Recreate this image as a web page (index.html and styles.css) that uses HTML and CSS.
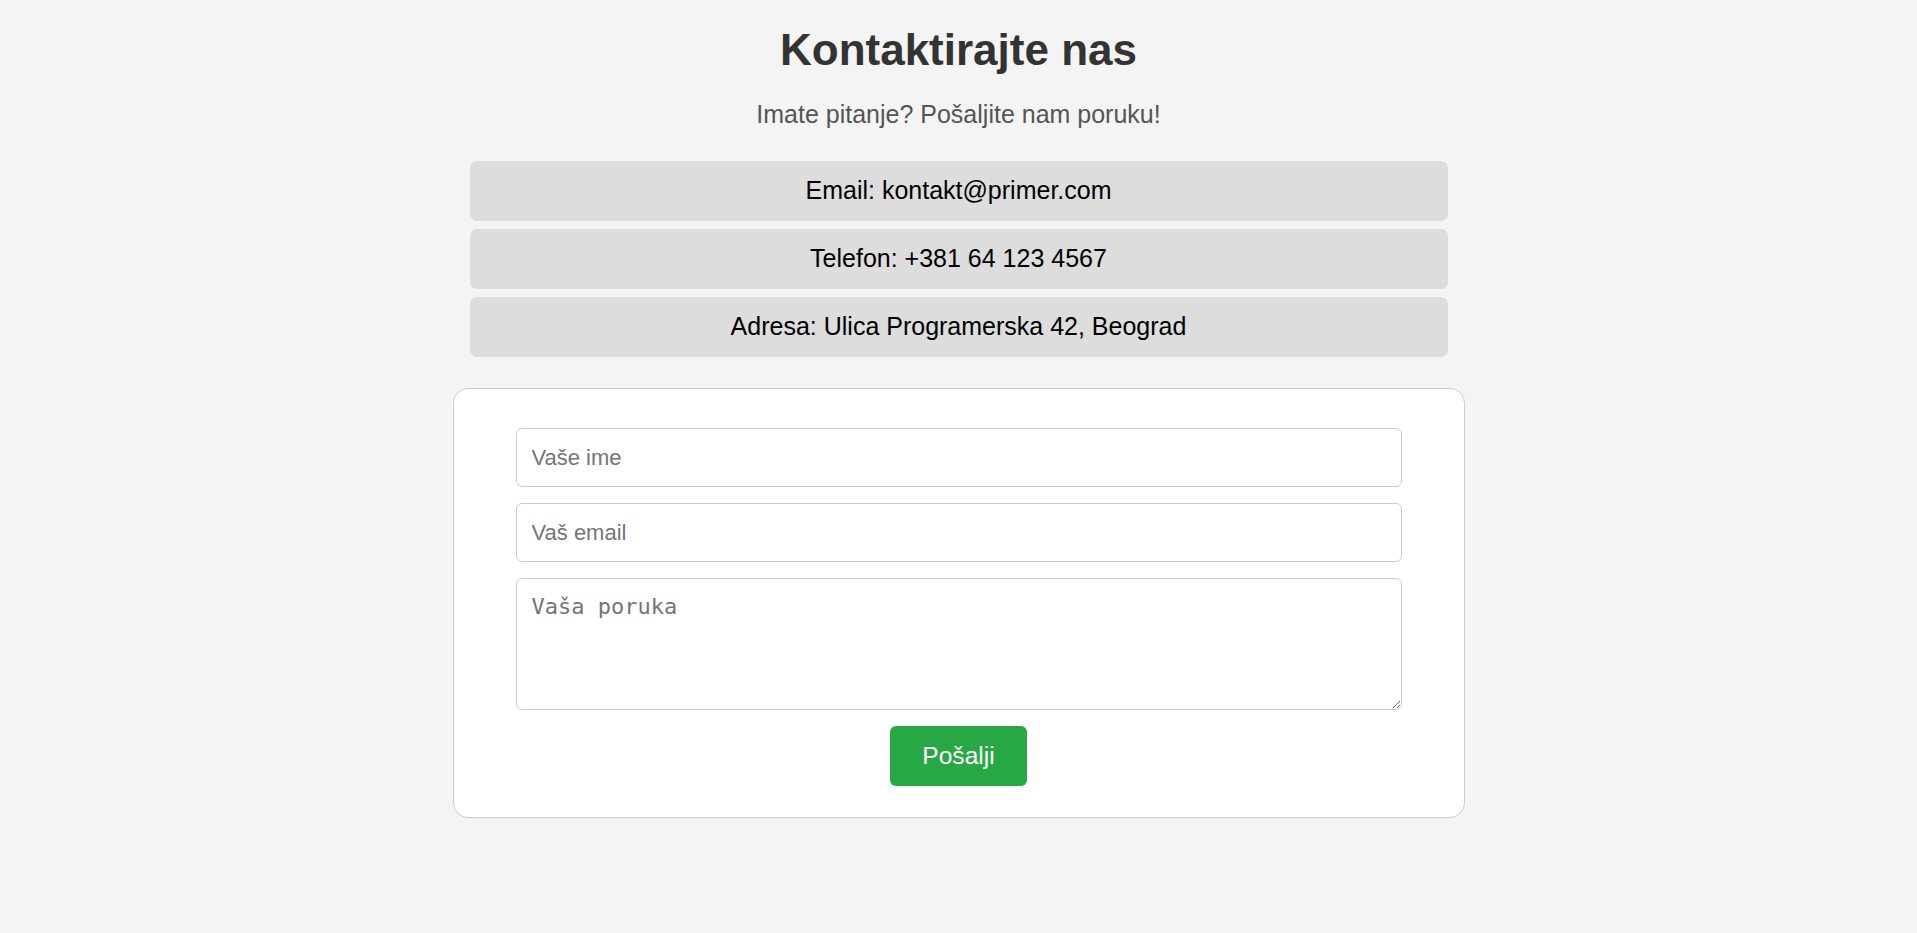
FILE: index.html
```html
<!DOCTYPE html>
<html lang="sr">
<head>
<meta charset="utf-8">
<title>Kontakt</title>
<link rel="stylesheet" href="styles.css">
</head>
<body>
<main class="page">
  <h1 class="title">Kontaktirajte nas</h1>
  <p class="subtitle">Imate pitanje? Pošaljite nam poruku!</p>
  <ul class="info-list">
    <li class="info-item">Email: kontakt@primer.com</li>
    <li class="info-item">Telefon: +381 64 123 4567</li>
    <li class="info-item">Adresa: Ulica Programerska 42, Beograd</li>
  </ul>
  <form class="contact-card">
    <input class="field" type="text" placeholder="Vaše ime">
    <input class="field" type="email" placeholder="Vaš email">
    <textarea class="field field-message" placeholder="Vaša poruka"></textarea>
    <button class="submit" type="button">Pošalji</button>
  </form>
</main>
</body>
</html>
```
FILE: styles.css
```css
html, body {
  margin: 0;
  padding: 0;
}

body {
  background: #f4f4f4;
  font-family: "Liberation Sans", Arial, sans-serif;
  color: #333;
}

.page {
  display: flex;
  flex-direction: column;
  align-items: center;
  padding-top: 25px;
}

.title {
  margin: 0;
  font-size: 44px;
  line-height: 50px;
  font-weight: bold;
  color: #333;
}

.subtitle {
  margin: 25px 0 0;
  font-size: 25px;
  line-height: 28px;
  color: #555;
}

.info-list {
  list-style: none;
  margin: 33px 0 0;
  padding: 0;
  width: 978px;
  display: flex;
  flex-direction: column;
  gap: 8px;
}

.info-item {
  background: #dddddd;
  border-radius: 7px;
  padding: 15px 16px 17px;
  font-size: 25px;
  line-height: 28px;
  text-align: center;
  color: #000;
}

.contact-card {
  margin-top: 31px;
  width: 1012px;
  box-sizing: border-box;
  background: #fff;
  border: 1px solid #cccccc;
  border-radius: 15px;
  padding: 39px 62px 31px;
  display: flex;
  flex-direction: column;
  align-items: center;
  gap: 16px;
}

.field {
  display: block;
  width: 100%;
  box-sizing: border-box;
  margin: 0;
  padding: 16px 15px;
  border: 1px solid #cccccc;
  border-radius: 6px;
  background: #fff;
  font-family: "Liberation Sans", Arial, sans-serif;
  font-size: 22px;
  line-height: 25px;
  color: #333;
}

.field::placeholder {
  color: #757575;
}

.field-message {
  height: 132px;
  font-family: "DejaVu Sans Mono", monospace;
  line-height: 26px;
  padding-top: 15px;
}

.submit {
  margin: 0;
  background: #28a745;
  color: #fff;
  border: none;
  border-radius: 6px;
  padding: 16px 32px;
  font-family: "Liberation Sans", Arial, sans-serif;
  font-size: 24.6px;
  line-height: 28px;
  cursor: pointer;
}
```
